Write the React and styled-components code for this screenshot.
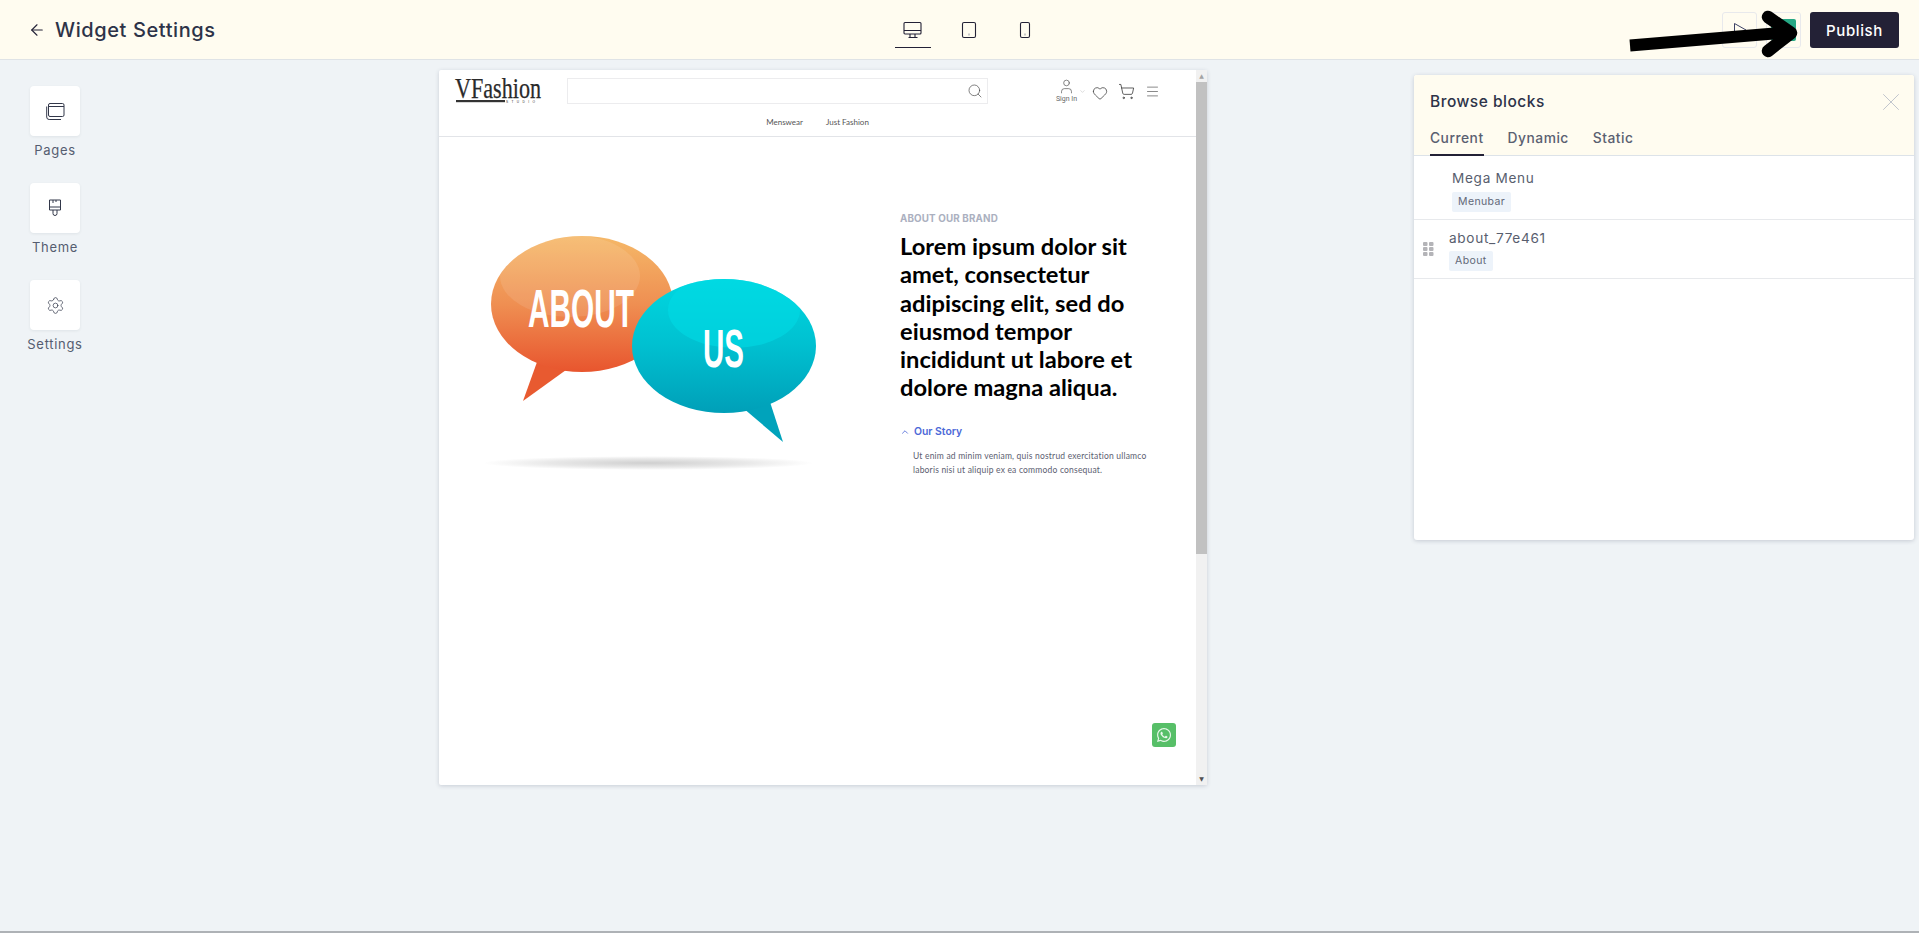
import React from "react";
import styled, { createGlobalStyle } from "styled-components";
import {
  ArrowLeft,
  ChevronDown,
  ChevronUp,
  Heart,
  Menu,
  Search,
  Settings,
  ShoppingCart,
  User,
  X
} from "lucide-react";
import { FaWhatsapp } from "react-icons/fa";

const Global = createGlobalStyle`
  html, body {
    margin: 0;
    padding: 0;
    height: 100%;
    overflow: hidden;
    background: #eff3f6;
  }
  * { box-sizing: border-box; }
`;

const uiFont = `"Inter", "Noto Sans", sans-serif`;

const Page = styled.div`
  position: relative;
  width: 1919px;
  height: 933px;
  display: flex;
  flex-direction: column;
  background: #eff3f6;
  border-bottom: 2px solid #aeb2b6;
  font-family: ${uiFont};
  color: #2d3348;
`;

const TopBar = styled.header`
  height: 60px;
  flex: none;
  display: grid;
  grid-template-columns: 1fr auto 1fr;
  align-items: center;
  padding: 0 20px 0 28px;
  background: #fffcf0;
  border-bottom: 1px solid #dfe3e6;
`;

const TitleGroup = styled.div`
  display: flex;
  align-items: center;
  gap: 9px;
`;

const Title = styled.h1`
  margin: 0;
  font-size: 20px;
  font-weight: 500;
  letter-spacing: 0.6px;
  color: #2d3348;
`;

const Devices = styled.div`
  display: flex;
  align-items: flex-start;
  height: 60px;
  gap: 20px;
  margin-left: 10px;
`;

const DeviceTab = styled.div`
  width: 36px;
  height: 48px;
  display: flex;
  align-items: center;
  justify-content: center;
  padding-top: 12px;
  border-bottom: 1px solid ${props => (props.active ? "#232136" : "transparent")};
`;

const Actions = styled.div`
  display: flex;
  justify-content: flex-end;
  align-items: center;
  gap: 9px;
`;

const GhostButton = styled.div`
  width: 35px;
  height: 36px;
  display: flex;
  align-items: center;
  justify-content: center;
  background: transparent;
  border: 1px solid #e8e9ec;
  border-radius: 3px;
`;

const GreenDot = styled.div`
  width: 25px;
  height: 22px;
  border-radius: 2px;
  background: #26a884;
`;

const PublishButton = styled.button`
  width: 89px;
  height: 36px;
  border: 0;
  border-radius: 3px;
  background: #232136;
  color: #fff;
  font-family: ${uiFont};
  font-size: 15px;
  font-weight: 500;
  letter-spacing: 0.6px;
`;

const Body = styled.main`
  flex: 1;
  display: flex;
  align-items: flex-start;
  min-height: 0;
`;

const Sidebar = styled.nav`
  width: 439px;
  flex: none;
  display: flex;
  flex-direction: column;
  gap: 24px;
  padding: 26px 0 0 25px;
`;

const SideItem = styled.div`
  width: 60px;
  display: flex;
  flex-direction: column;
  align-items: center;
  gap: 6px;
`;

const SideTile = styled.div`
  width: 50px;
  height: 50px;
  display: flex;
  align-items: center;
  justify-content: center;
  background: #fff;
  border-radius: 4px;
  box-shadow: 0 1px 3px rgba(40, 50, 70, 0.08);
`;

const SideLabel = styled.span`
  font-size: 13px;
  line-height: 17px;
  letter-spacing: 0.7px;
  color: #555d70;
`;

const Preview = styled.section`
  width: 768px;
  height: 715px;
  flex: none;
  margin-top: 10px;
  display: flex;
  background: #fff;
  border-radius: 2px;
  box-shadow: 0 1px 4px rgba(50, 60, 90, 0.2);
`;

const PreviewInner = styled.div`
  flex: 1;
  min-width: 0;
  display: flex;
  flex-direction: column;
`;

const Scrollbar = styled.div`
  width: 11px;
  display: flex;
  flex-direction: column;
  align-items: center;
  background: #f1f1f1;
`;

const ScrollArrow = styled.div`
  height: 12px;
  flex: none;
  display: flex;
  align-items: center;
  justify-content: center;
  font-size: 6px;
  line-height: 1;
  color: ${props => (props.dim ? "#a3a3a3" : "#505050")};
  font-family: "DejaVu Sans", sans-serif;
`;

const ScrollThumb = styled.div`
  width: 100%;
  height: 472px;
  flex: none;
  background: #c1c1c1;
`;

const ScrollRest = styled.div`
  flex: 1;
`;

const SiteHeader = styled.div`
  height: 67px;
  flex: none;
  border-bottom: 1px solid #e2e4e8;
  display: flex;
  flex-direction: column;
`;

const SiteTop = styled.div`
  display: flex;
  align-items: flex-start;
  padding: 8px 0 0 16px;
`;

const Logo = styled.svg`
  width: 90px;
  height: 27px;
  flex: none;
  overflow: visible;
`;

const SearchBox = styled.div`
  width: 421px;
  height: 26px;
  margin-left: 22px;
  padding-right: 4px;
  flex: none;
  display: flex;
  align-items: center;
  justify-content: flex-end;
  border: 1px solid #ececee;
`;

const SiteIcons = styled.div`
  display: flex;
  align-items: flex-start;
  margin-left: 67.5px;
`;

const SignIn = styled.div`
  width: 22px;
  display: flex;
  flex-direction: column;
  align-items: center;
  font-family: "Roboto", sans-serif;
  font-size: 7px;
  line-height: 8px;
  color: #666;
`;

const IconSlot = styled.div`
  margin-left: ${props => props.gap}px;
  margin-top: ${props => props.top}px;
  display: flex;
`;

const SiteNav = styled.div`
  display: flex;
  justify-content: center;
  gap: 23px;
  margin-top: 11px;
  font-family: "Lato", sans-serif;
  font-size: 8px;
  line-height: 12px;
  color: #555;
`;

const Content = styled.div`
  flex: 1;
  min-height: 0;
  display: grid;
  grid-template-columns: 461px 1fr;
  position: relative;
`;

const Hero = styled.svg`
  width: 380px;
  height: 270px;
  margin: 73px 0 0 21px;
  display: block;
`;

const Copy = styled.div`
  padding-top: 75px;
`;

const Eyebrow = styled.div`
  font-size: 9.8px;
  line-height: 14px;
  font-weight: 700;
  letter-spacing: 0.15px;
  color: #abb0c0;
`;

const Headline = styled.h2`
  margin: 6px 0 0;
  width: 250px;
  font-family: "Lato", sans-serif;
  font-size: 23.7px;
  line-height: 28.3px;
  font-weight: 700;
  color: #000;
`;

const StoryToggle = styled.div`
  display: flex;
  align-items: center;
  gap: 4px;
  margin-top: 23.5px;
  font-size: 10.4px;
  line-height: 14px;
  font-weight: 600;
  color: #4d69d8;
`;

const StoryText = styled.p`
  margin: 10px 0 0 13px;
  width: 240px;
  font-family: "Lato", sans-serif;
  font-size: 8.5px;
  line-height: 14px;
  letter-spacing: 0.2px;
  color: #5b5d70;
`;

const WhatsApp = styled.div`
  position: absolute;
  right: 20px;
  bottom: 38px;
  width: 24px;
  height: 24px;
  display: flex;
  align-items: center;
  justify-content: center;
  border-radius: 3px;
  background: #57bf68;
  color: #e8f7ea;
`;

const Panel = styled.aside`
  width: 500px;
  height: 465px;
  flex: none;
  margin: 15px 0 0 207px;
  background: #fff;
  border-radius: 3px;
  box-shadow: 0 1px 4px rgba(50, 60, 90, 0.22);
  overflow: hidden;
`;

const PanelHead = styled.div`
  position: relative;
  height: 81px;
  padding: 17px 16px 0;
  background: #fffcf0;
  border-bottom: 1px solid #dde3e9;
`;

const PanelTitle = styled.div`
  font-size: 15.5px;
  line-height: 20px;
  font-weight: 500;
  letter-spacing: 0.5px;
  color: #2d3348;
`;

const CloseSlot = styled.div`
  position: absolute;
  top: 12px;
  right: 8px;
  display: flex;
  color: #b9bec8;
`;

const Tabs = styled.div`
  display: flex;
  gap: 24px;
  margin-top: 16px;
`;

const Tab = styled.div`
  height: 28px;
  font-size: 13.8px;
  line-height: 20px;
  font-weight: 500;
  letter-spacing: 0.5px;
  color: #5a6070;
  border-bottom: 2px solid ${props => (props.active ? "#232136" : "transparent")};
`;

const Row = styled.div`
  position: relative;
  height: ${props => props.height}px;
  padding: ${props => props.top}px 0 0 ${props => props.indent}px;
  border-bottom: 1px solid #e7e9ec;
`;

const RowName = styled.div`
  font-size: 13.6px;
  line-height: 20px;
  letter-spacing: 0.7px;
  color: #585e6e;
`;

const Chip = styled.span`
  display: inline-block;
  margin-top: 3.5px;
  padding: 0 6px;
  height: 20px;
  border-radius: 2px;
  background: #edf3fa;
  font-size: 10.5px;
  line-height: 20px;
  letter-spacing: 0.4px;
  color: #626878;
`;

const DragDots = styled.svg`
  position: absolute;
  left: 9px;
  top: 22px;
  width: 11px;
  height: 14px;
`;

const PointerArrow = styled.svg`
  position: absolute;
  left: 1620px;
  top: 4px;
  width: 190px;
  height: 60px;
`;

const MonitorIcon = () => (
  <svg width="20" height="18" viewBox="0 0 20 18" fill="none" stroke="#232136" strokeWidth="1.1">
    <rect x="1" y="1.5" width="17" height="11.5" rx="1" />
    <path d="M1 9.5h17M7 13v3M12 13v3M5.5 16.5h9" />
  </svg>
);

const TabletIcon = () => (
  <svg width="16" height="18" viewBox="0 0 16 18" fill="none" stroke="#232136" strokeWidth="1.1">
    <rect x="1.5" y="1.5" width="13" height="15" rx="1.5" />
    <rect x="7" y="12.5" width="2" height="2" fill="#c8c8c8" stroke="none" />
  </svg>
);

const PhoneIcon = () => (
  <svg width="12" height="18" viewBox="0 0 12 18" fill="none" stroke="#232136" strokeWidth="1.1">
    <rect x="1.5" y="1.5" width="9" height="15" rx="1.5" />
    <rect x="5" y="12.5" width="2" height="2" fill="#c8c8c8" stroke="none" />
  </svg>
);

const PagesIcon = () => (
  <svg width="19" height="17" viewBox="0 0 19 17" fill="none" stroke="#33384a" strokeWidth="1">
    <rect x="2.5" y="0.5" width="15.5" height="13" rx="1.5" />
    <path d="M2.5 3.5h15.5" />
    <path d="M0.7 3.5v10.5a2.5 2.5 0 0 0 2.5 2.5H15" />
  </svg>
);

const BrushIcon = () => (
  <svg width="14" height="18" viewBox="0 0 14 18" fill="none" stroke="#33384a" strokeWidth="1">
    <path d="M1.5 1h11v10h-11z" />
    <path d="M1.5 8h11" />
    <path d="M5 1v3M8 1v2" />
    <path d="M5 11v3.5a2 2 0 0 0 4 0V11" />
  </svg>
);

const PlayIcon = () => (
  <svg width="14" height="16" viewBox="0 0 14 16" fill="none" stroke="#3c4166" strokeWidth="1">
    <path d="M1.5 1.5v13L13 8z" />
  </svg>
);

const SpeechBubbles = () => (
  <Hero viewBox="0 0 380 270">
    <defs>
      <linearGradient id="warm" x1="0" y1="0" x2="0" y2="1">
        <stop offset="0" stopColor="#f5b868" />
        <stop offset="0.5" stopColor="#ef8f52" />
        <stop offset="1" stopColor="#e8552e" />
      </linearGradient>
      <linearGradient id="cool" x1="0" y1="0" x2="0" y2="1">
        <stop offset="0" stopColor="#00d7e0" />
        <stop offset="0.5" stopColor="#00c0d0" />
        <stop offset="1" stopColor="#009fb8" />
      </linearGradient>
      <radialGradient id="floor">
        <stop offset="0" stopColor="#cfcfcf" />
        <stop offset="0.6" stopColor="#e8e8e8" />
        <stop offset="1" stopColor="#ffffff" />
      </radialGradient>
      <clipPath id="warmClip">
        <ellipse cx="122" cy="94" rx="91" ry="68" />
      </clipPath>
      <clipPath id="coolClip">
        <ellipse cx="264" cy="136" rx="92" ry="67" />
      </clipPath>
    </defs>
    <ellipse cx="188" cy="253" rx="165" ry="7" fill="url(#floor)" />
    <path d="M77 152 L63 191 L106 160 Z" fill="#e85a30" />
    <ellipse cx="122" cy="94" rx="91" ry="68" fill="url(#warm)" />
    <g clipPath="url(#warmClip)">
      <ellipse cx="110" cy="66" rx="70" ry="41" fill="#fff" opacity="0.1" />
    </g>
    <text
      x="68"
      y="117"
      fontFamily="Liberation Sans, sans-serif"
      fontWeight="700"
      fontSize="53"
      fill="#fff"
      textLength="106"
      lengthAdjust="spacingAndGlyphs"
    >
      ABOUT
    </text>
    <path d="M283 198 L323 232 L310 192 Z" fill="#00a3bb" />
    <ellipse cx="264" cy="136" rx="92" ry="67" fill="url(#cool)" />
    <g clipPath="url(#coolClip)">
      <ellipse cx="274" cy="100" rx="66" ry="38" fill="#00dbe4" opacity="0.6" />
    </g>
    <text
      x="243"
      y="157"
      fontFamily="Liberation Sans, sans-serif"
      fontWeight="700"
      fontSize="53"
      fill="#fff"
      textLength="41"
      lengthAdjust="spacingAndGlyphs"
    >
      US
    </text>
  </Hero>
);

const BrandLogo = () => (
  <Logo viewBox="0 0 90 27">
    <text
      x="0"
      y="20"
      fontFamily="Liberation Serif, serif"
      fontSize="29"
      stroke="#2a2a2a"
      strokeWidth="0.25"
      fill="#2a2a2a"
      textLength="86"
      lengthAdjust="spacingAndGlyphs"
    >
      VFashion
    </text>
    <rect x="1" y="22" width="49" height="2.2" fill="#333" />
    <text x="51" y="25" fontFamily="Liberation Sans, sans-serif" fontSize="3.2" letterSpacing="3.4" fill="#333">
      STUDIO
    </text>
  </Logo>
);

export default function App() {
  return (
    <Page>
      <Global />
      <TopBar>
        <TitleGroup>
          <ArrowLeft size={18} strokeWidth={1.5} color="#232136" />
          <Title>Widget Settings</Title>
        </TitleGroup>
        <Devices>
          <DeviceTab active>
            <MonitorIcon />
          </DeviceTab>
          <DeviceTab>
            <TabletIcon />
          </DeviceTab>
          <DeviceTab>
            <PhoneIcon />
          </DeviceTab>
        </Devices>
        <Actions>
          <GhostButton>
            <PlayIcon />
          </GhostButton>
          <GhostButton>
            <GreenDot />
          </GhostButton>
          <PublishButton>Publish</PublishButton>
        </Actions>
      </TopBar>

      <Body>
        <Sidebar>
          <SideItem>
            <SideTile>
              <PagesIcon />
            </SideTile>
            <SideLabel>Pages</SideLabel>
          </SideItem>
          <SideItem>
            <SideTile>
              <BrushIcon />
            </SideTile>
            <SideLabel>Theme</SideLabel>
          </SideItem>
          <SideItem>
            <SideTile>
              <Settings size={19} strokeWidth={0.9} color="#33384a" />
            </SideTile>
            <SideLabel>Settings</SideLabel>
          </SideItem>
        </Sidebar>

        <Preview>
          <PreviewInner>
            <SiteHeader>
              <SiteTop>
                <BrandLogo />
                <SearchBox>
                  <Search size={16} strokeWidth={1} color="#444" />
                </SearchBox>
                <SiteIcons>
                  <SignIn>
                    <User size={17} strokeWidth={0.9} color="#444" />
                    Sign In
                  </SignIn>
                  <IconSlot gap={1} top={10}>
                    <ChevronDown size={7} strokeWidth={1} color="#888" />
                  </IconSlot>
                  <IconSlot gap={6} top={7}>
                    <Heart size={16} strokeWidth={1.1} color="#333" />
                  </IconSlot>
                  <IconSlot gap={10} top={5}>
                    <ShoppingCart size={17} strokeWidth={1.1} color="#333" />
                  </IconSlot>
                  <IconSlot gap={10} top={6}>
                    <Menu size={15} strokeWidth={1} color="#444" />
                  </IconSlot>
                </SiteIcons>
              </SiteTop>
              <SiteNav>
                <span>Menswear</span>
                <span>Just Fashion</span>
              </SiteNav>
            </SiteHeader>
            <Content>
              <SpeechBubbles />
              <Copy>
                <Eyebrow>ABOUT OUR BRAND</Eyebrow>
                <Headline>
                  Lorem ipsum dolor sit amet, consectetur adipiscing elit, sed do eiusmod tempor incididunt ut
                  labore et dolore magna aliqua.
                </Headline>
                <StoryToggle>
                  <ChevronUp size={10} strokeWidth={2} color="#4d69d8" />
                  Our Story
                </StoryToggle>
                <StoryText>
                  Ut enim ad minim veniam, quis nostrud exercitation ullamco laboris nisi ut aliquip ex ea commodo
                  consequat.
                </StoryText>
              </Copy>
              <WhatsApp>
                <FaWhatsapp size={16} />
              </WhatsApp>
            </Content>
          </PreviewInner>
          <Scrollbar>
            <ScrollArrow dim>▲</ScrollArrow>
            <ScrollThumb />
            <ScrollRest />
            <ScrollArrow>▼</ScrollArrow>
          </Scrollbar>
        </Preview>

        <Panel>
          <PanelHead>
            <PanelTitle>Browse blocks</PanelTitle>
            <CloseSlot>
              <X size={30} strokeWidth={0.7} />
            </CloseSlot>
            <Tabs>
              <Tab active>Current</Tab>
              <Tab>Dynamic</Tab>
              <Tab>Static</Tab>
            </Tabs>
          </PanelHead>
          <Row height={64} top={12} indent={38}>
            <RowName>Mega Menu</RowName>
            <Chip>Menubar</Chip>
          </Row>
          <Row height={59} top={7.5} indent={35}>
            <DragDots viewBox="0 0 11 14">
              <g fill="#b4b4b8">
                <rect x="0" y="0" width="4.5" height="4" rx="1" />
                <rect x="6" y="0" width="4.5" height="4" rx="1" />
                <rect x="0" y="5" width="4.5" height="4" rx="1" />
                <rect x="6" y="5" width="4.5" height="4" rx="1" />
                <rect x="0" y="10" width="4.5" height="4" rx="1" />
                <rect x="6" y="10" width="4.5" height="4" rx="1" />
              </g>
            </DragDots>
            <RowName>about_77e461</RowName>
            <Chip>About</Chip>
          </Row>
        </Panel>
      </Body>

      <PointerArrow viewBox="0 0 190 60">
        <g stroke="#000" fill="none" strokeLinecap="round" strokeLinejoin="round">
          <path d="M10 41.5 L172 28" strokeWidth="12" strokeLinecap="butt" />
          <path d="M148 13 L171 29 L148 47" strokeWidth="12.5" />
        </g>
      </PointerArrow>
    </Page>
  );
}
